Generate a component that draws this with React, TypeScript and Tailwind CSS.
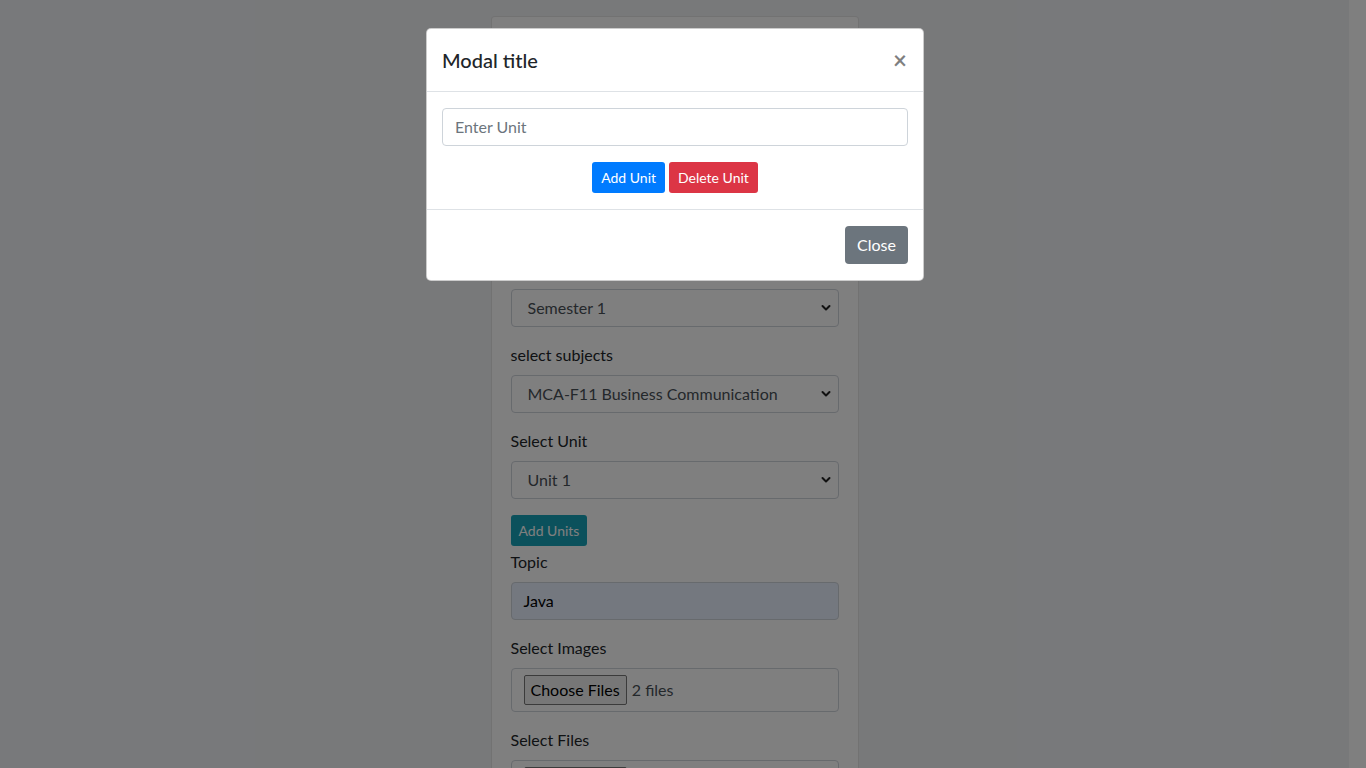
import React from 'react';

const font = "font-['Segoe_UI',Lato,'Liberation_Sans',sans-serif]";

function Chevron() {
  return (
    <svg
      className="pointer-events-none absolute right-[7px] top-1/2 -translate-y-1/2"
      width="10"
      height="7"
      viewBox="0 0 10 7"
      fill="none"
    >
      <path d="M1.5 1.5 L5 5 L8.5 1.5" stroke="#222" strokeWidth="2" strokeLinecap="round" strokeLinejoin="round" />
    </svg>
  );
}

function SelectBox({ value }: { value: string }) {
  return (
    <div className="relative h-[38px] w-full rounded-[4px] border border-[#ced4da] bg-white">
      <div className="flex h-full items-center pl-4 text-base text-[#495057]">{value}</div>
      <Chevron />
    </div>
  );
}

function Label({ children }: { children: React.ReactNode }) {
  return <label className="mb-2 block text-base leading-6 text-[#212529]">{children}</label>;
}

function FileBox({ count }: { count: string }) {
  return (
    <div className="flex h-[44px] w-full items-center rounded-[4px] border border-[#ced4da] bg-white pl-3">
      <div className="flex h-[30px] items-center rounded-[2px] border border-[#767676] bg-[#efefef] px-[6px] text-base text-black">
        Choose Files
      </div>
      <span className="ml-[5px] text-base text-[#495057]">{count}</span>
    </div>
  );
}

export default function App() {
  return (
    <div className={`relative flex h-[768px] overflow-hidden ${font}`}>
      <div className="h-full flex-1 bg-[#f0f2f5]">
        <div className="mx-auto mt-4 w-[368px] rounded-[4px] border border-black/10 bg-white px-[19px] pt-[11px]">
          <div className="mx-auto h-[60px] w-[60px] rounded-full bg-[#007bff]" />
          <h4 className="mb-[46px] mt-2 text-center text-[24px] leading-[29px] text-[#212529]">Upload Notes</h4>

          <div className="mb-4">
            <Label>Select Course</Label>
            <SelectBox value="MCA" />
          </div>
          <div className="mb-4">
            <Label>Select Semester</Label>
            <SelectBox value="Semester 1" />
          </div>
          <div className="mb-4">
            <Label>select subjects</Label>
            <SelectBox value="MCA-F11 Business Communication" />
          </div>
          <div className="mb-4">
            <Label>Select Unit</Label>
            <SelectBox value="Unit 1" />
          </div>
          <button className="mb-1 h-[31px] rounded-[3px] bg-[#17a2b8] px-2 text-sm text-white">Add Units</button>
          <div className="mb-4">
            <Label>Topic</Label>
            <div className="flex h-[38px] w-full items-center rounded-[4px] border border-[#ced4da] bg-[#e8f0fe] px-3 text-base text-black">
              Java
            </div>
          </div>
          <div className="mb-4">
            <Label>Select Images</Label>
            <FileBox count="2 files" />
          </div>
          <div className="mb-4">
            <Label>Select Files</Label>
            <FileBox count="1 file" />
          </div>
        </div>
      </div>
      <div className="h-full w-[17px] bg-white" />

      <div className="absolute inset-0 bg-black/50" />

      <div className="absolute left-[426px] top-[28px] w-[498px] rounded-[5px] border border-black/20 bg-white">
        <div className="flex items-center justify-between border-b border-[#dee2e6] p-4 pl-[15px]">
          <h5 className="text-[20px] font-medium leading-[30px] text-[#212529]">Modal title</h5>
          <span className="text-[24px] font-bold leading-none text-black/50">×</span>
        </div>
        <div className="px-[15px] py-4">
          <div className="flex h-[38px] w-full items-center rounded-[4px] border border-[#ced4da] px-3 text-base text-[#6c757d]">
            Enter Unit
          </div>
          <div className="mt-4 flex justify-center gap-1">
            <button className="h-[31px] rounded-[3px] bg-[#007bff] px-[9px] text-sm text-white">Add Unit</button>
            <button className="h-[31px] rounded-[3px] bg-[#dc3545] px-[9px] text-sm text-white">Delete Unit</button>
          </div>
        </div>
        <div className="flex justify-end border-t border-[#dee2e6] py-3 pl-3 pr-[11px]">
          <button className="m-1 h-[38px] rounded-[4px] bg-[#6c757d] px-3 text-base text-white">Close</button>
        </div>
      </div>
    </div>
  );
}
